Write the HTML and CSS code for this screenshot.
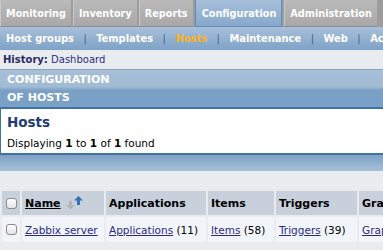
FILE: index.html
```html
<!DOCTYPE html>
<html lang="en">
<head>
  <meta charset="UTF-8">
  <title>Configuration of hosts</title>
  <link rel="stylesheet" href="styles.css">
</head>
<body>
<div class="page">
  <ul class="topmenu">
    <li>Monitoring</li>
    <li>Inventory</li>
    <li>Reports</li>
    <li class="active">Configuration</li>
    <li>Administration</li>
  </ul>
  <div class="submenu">
    <span>Host groups</span><i>|</i>
    <span>Templates</span><i>|</i>
    <span class="current">Hosts</span><i>|</i>
    <span>Maintenance</span><i>|</i>
    <span>Web</span><i>|</i>
    <span>Actions</span>
  </div>
  <div class="history"><b>History:</b> <a href="#">Dashboard</a></div>
  <div class="page-header">
    <div class="page-title">CONFIGURATION<br>OF HOSTS</div>
  </div>
  <div class="box">
    <h2>Hosts</h2>
    <div class="found">Displaying <b>1</b> to <b>1</b> of <b>1</b> found</div>
  </div>
  <div class="bar"></div>
  <div class="spacer"></div>
  <table class="list">
    <thead>
      <tr>
        <th class="cb"><span class="check"></span></th>
        <th class="c-name"><a href="#">Name</a><svg class="sort" width="18" height="14" viewBox="0 0 18 14">
            <path d="M3 5h3v4h3l-4.5 4.5L0 9h3z" fill="#b4b4b4"/>
            <path d="M11 9h3V4.5h3L12.5 0 8 4.5h3z" fill="#3a6fb5"/>
          </svg></th>
        <th class="c-apps">Applications</th>
        <th class="c-items">Items</th>
        <th class="c-trig">Triggers</th>
        <th class="c-graphs">Graphs</th>
      </tr>
    </thead>
    <tbody>
      <tr>
        <td class="cb"><span class="check"></span></td>
        <td><a href="#">Zabbix server</a></td>
        <td><a href="#">Applications</a> (11)</td>
        <td><a href="#">Items</a> (58)</td>
        <td><a href="#">Triggers</a> (39)</td>
        <td><a href="#">Graphs</a> (10)</td>
      </tr>
    </tbody>
  </table>
</div>
</body>
</html>
```

FILE: styles.css
```css
html {
  overflow: hidden;
}
body {
  margin: 0;
  background: #e9ecef;
  font-family: 'DejaVu Sans', Verdana, sans-serif;
  font-size: 10.5px;
  color: #000;
}
.page {
  width: 640px;
}
a {
  color: #2b2b86;
}
.topmenu {
  list-style: none;
  margin: 0;
  padding: 0;
  display: flex;
  height: 27px;
  background: #9c9c9c;
  font-family: 'DejaVu Sans Condensed', 'DejaVu Sans', sans-serif;
}
.topmenu li {
  display: flex;
  align-items: center;
  padding: 0 5px 0 6px;
  margin-right: 2px;
  border-bottom: 1px solid #8d8d8d;
  background: linear-gradient(#bababa, #a8a8a8);
  box-shadow: inset 1px 0 0 #c8c8c8;
  color: #fff;
  font-weight: bold;
  font-size: 10.8px;
}
.topmenu li.active {
  background: linear-gradient(#a7c0da, #86a8cc);
  border: 1px solid #5e8cbd;
  border-top: 0;
  box-shadow: none;
}
.submenu {
  height: 23px;
  display: flex;
  align-items: center;
  gap: 9.5px;
  padding-left: 6px;
  background: linear-gradient(#a8c0d9, #7ea2c6);
  color: #fff;
  font-family: 'DejaVu Sans Condensed', 'DejaVu Sans', sans-serif;
  font-weight: bold;
  font-size: 11px;
  white-space: nowrap;
}
.submenu i {
  font-style: normal;
  font-weight: normal;
  color: #4a5d8f;
}
.submenu .current {
  color: #ffb31a;
}
.history {
  height: 19px;
  line-height: 19px;
  padding-left: 3px;
  font-size: 10px;
  color: #2a2a66;
}
.history a {
  text-decoration: none;
}
.page-header {
  border-top: 1px solid #8aa3bf;
  height: 37px;
  background: linear-gradient(#a6bfd7 0, #a2bbd5 45%, #7aa0c5 55%, #79a0c6 100%);
  border-bottom: 2px solid #3f73a6;
}
.page-title {
  padding: 1px 0 0 7px;
  color: #fff;
  font-weight: bold;
  font-size: 11px;
  line-height: 18px;
}
.box {
  width: 381px;
  background: #fff;
  border-left: 1px solid #3f73a6;
  padding: 0 0 0 6px;
  height: 44px;
  border-bottom: 2px solid #3f73a6;
}
.box h2 {
  margin: 0;
  font-size: 13.5px;
  line-height: 27px;
  color: #213b78;
}
.found {
  line-height: 15px;
}
.bar {
  height: 16px;
  background: linear-gradient(#7da1c5, #a7c0d8);
}
.spacer {
  height: 19px;
}
.list {
  border-spacing: 2px;
  margin-top: -1px;
}
.list th, .list td {
  text-align: left;
  white-space: nowrap;
  padding: 0 3px;
}
.list th {
  height: 24px;
  background: #c8d1db;
  font-size: 11px;
}
.list td {
  height: 25px;
  background: #f1f5f9;
}
.list th a {
  color: #000;
}
.list .cb {
  width: 18px;
  padding: 0;
}
.check {
  display: block;
  box-sizing: border-box;
  width: 11px;
  height: 11px;
  margin-left: 4px;
  border: 1px solid #8c8c8c;
  border-radius: 3px;
  background: linear-gradient(#fff, #e4e4e4);
}
.c-name { width: 76px; }
.c-apps { width: 94px; }
.c-items { width: 60px; }
.c-trig { width: 75px; }
.sort {
  vertical-align: -3px;
  margin-left: 5px;
}
```
